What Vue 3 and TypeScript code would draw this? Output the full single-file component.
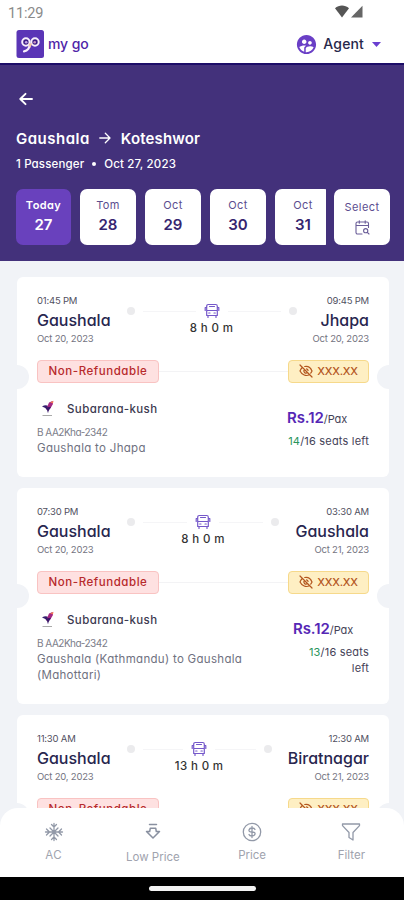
<script setup lang="ts">
interface Stop { time: string; city: string; date: string }
interface Trip {
  from: Stop; to: Stop; duration: string
  details?: { route: string; free: number; total: number }
  tall: boolean
}
interface Day { label: string; day: number }

const days: Day[] = [
  { label: 'Today', day: 27 },
  { label: 'Tom', day: 28 },
  { label: 'Oct', day: 29 },
  { label: 'Oct', day: 30 },
  { label: 'Oct', day: 31 },
]

const trips: Trip[] = [
  {
    from: { time: '01:45 PM', city: 'Gaushala', date: 'Oct 20, 2023' },
    to: { time: '09:45 PM', city: 'Jhapa', date: 'Oct 20, 2023' },
    duration: '8 h 0 m', tall: false,
    details: { route: 'Gaushala to Jhapa', free: 14, total: 16 },
  },
  {
    from: { time: '07:30 PM', city: 'Gaushala', date: 'Oct 20, 2023' },
    to: { time: '03:30 AM', city: 'Gaushala', date: 'Oct 21, 2023' },
    duration: '8 h 0 m', tall: true,
    details: { route: 'Gaushala (Kathmandu) to Gaushala (Mahottari)', free: 13, total: 16 },
  },
  {
    from: { time: '11:30 AM', city: 'Gaushala', date: 'Oct 20, 2023' },
    to: { time: '12:30 AM', city: 'Biratnagar', date: 'Oct 21, 2023' },
    duration: '13 h 0 m', tall: false,
  },
]
</script>

<template>
  <div class="phone">
    <div class="status">
      <span class="clock">11:29</span>
      <svg class="signals" width="28" height="13" viewBox="0 0 28 13">
        <path d="M0 3.2C4 -.4 10 -.4 14 3.2L7 12.4z" fill="#555" />
        <path d="M27.5 .8V12.4H16z" fill="#666" />
      </svg>
    </div>

    <div class="brandbar">
      <svg class="logo" width="28" height="28" viewBox="0 0 28 28">
        <rect x=".5" width="27.500" height="28" rx="2.500" fill="#5a35b6" />
        <path d="M13.500 13.500C14.200 18 11.500 20.800 8 21.300" fill="none" stroke="#f7effb" stroke-width="2.200" stroke-linecap="round" />
        <circle cx="9.900" cy="12" r="3.700" fill="#3b1b87" stroke="#f7effb" stroke-width="2" />
        <circle cx="19" cy="12" r="3.700" fill="#3b1b87" stroke="#f7effb" stroke-width="2" />
        <circle cx="10.200" cy="12.200" r="1.300" fill="#c3a6e4" />
        <circle cx="18.700" cy="12.200" r="1.300" fill="#c994c0" />
        <path d="M12.600 13.500h3.600l-2.100 4.500z" fill="#f6c3a0" />
      </svg>
      <span class="brand">my go</span>
      <div class="agent">
        <svg width="23" height="23" viewBox="0 0 24 24" fill="#6a3fc6">
          <path d="M11.99 2c-5.52 0-10 4.48-10 10s4.480 10 10 10 10-4.480 10-10-4.480-10-10-10zm3.610 6.340c1.070 0 1.930.86 1.930 1.930 0 1.070-.86 1.930-1.930 1.930-1.070 0-1.930-.86-1.930-1.930-.01-1.070.86-1.930 1.930-1.930zm-6-1.580c1.300 0 2.360 1.060 2.360 2.360 0 1.300-1.060 2.360-2.360 2.360s-2.360-1.060-2.360-2.360c0-1.310 1.050-2.360 2.360-2.360zm0 9.130v3.750c-2.400-.75-4.300-2.600-5.140-4.960 1.050-1.120 3.670-1.690 5.140-1.690.53 0 1.200.08 1.900.22-1.640.87-1.900 2.020-1.900 2.680zM11.990 20c-.27 0-.53-.01-.79-.04v-4.070c0-1.420 2.940-2.130 4.400-2.130 1.070 0 2.920.39 3.840 1.150-1.170 2.970-4.060 5.090-7.450 5.090z" />
        </svg>
        <span class="agent-name">Agent</span>
        <svg class="caret" width="9" height="5" viewBox="0 0 9 5"><path d="M0 0h9L4.500 5z" fill="#6a3fd0" /></svg>
      </div>
    </div>

    <header class="hero">
      <svg class="back" width="14" height="14" viewBox="0 0 14 14" fill="none" stroke="#fff" stroke-width="1.900" stroke-linecap="round" stroke-linejoin="round">
        <path d="M13 7H1.500M6.500 1.800L1.300 7l5.200 5.200" />
      </svg>
      <div class="title">
        <span class="t1">Gaushala</span>
        <svg width="12" height="12" viewBox="0 0 12 12" fill="none" stroke="#fff" stroke-width="1.300" stroke-linecap="round" stroke-linejoin="round">
          <path d="M.8 6h10M6.300 1.300L11 6l-4.700 4.700" />
        </svg>
        <span class="t2">Koteshwor</span>
      </div>
      <div class="sub"><span>1 Passenger</span><i class="bullet" /><span>Oct 27, 2023</span></div>
      <div class="dates">
        <div class="strip">
          <div v-for="(d, i) in days" :key="d.day" class="chip" :class="{ active: i === 0 }">
            <span class="chip-label">{{ d.label }}</span>
            <span class="chip-day">{{ d.day }}</span>
          </div>
        </div>
        <div class="chip select">
          <span class="chip-label">Select</span>
          <svg width="15" height="15" viewBox="0 0 15 15" fill="none" stroke="#6a5d98" stroke-width="1.100" stroke-linecap="round" stroke-linejoin="round">
            <path d="M7 14H2.500A1.500 1.500 0 0 1 1 12.500V3.500A1.500 1.500 0 0 1 2.500 2h9.500A1.500 1.500 0 0 1 13.500 3.500V7.500M1 5.500h12.500M4.300.8v2.400M10.200.8v2.400" />
            <circle cx="10.700" cy="10.700" r="2.100" /><path d="M12.300 12.300L14 14" />
          </svg>
        </div>
      </div>
    </header>

    <main class="list">
      <article v-for="t in trips" :key="t.from.time" class="card" :class="{ tall: t.tall }">
        <i class="notch left" /><i class="notch right" />
        <div class="journey">
          <div class="stop">
            <span class="time">{{ t.from.time }}</span>
            <span class="city">{{ t.from.city }}</span>
            <span class="date">{{ t.from.date }}</span>
          </div>
          <div class="track">
            <div class="rail">
              <i class="dot" /><i class="line" />
              <svg width="16" height="16" viewBox="0 0 16 16" fill="none" stroke="#7558ca" stroke-width="1.200" stroke-linecap="round" stroke-linejoin="round">
                <path d="M4.300 1.500h7.400Q13.300 1.500 13.300 3.200V12.500H2.700V3.200Q2.700 1.500 4.300 1.500zM2.700 7.500h10.600M5.500 3.500h5M2.600 4.500H1.200v3M13.400 4.500h1.400v3M4 12.700v1.800M12 12.700v1.800M4.700 10h1.300M10 10h1.300" />
              </svg>
              <i class="line" /><i class="dot" />
            </div>
            <span class="duration">{{ t.duration }}</span>
          </div>
          <div class="stop end">
            <span class="time">{{ t.to.time }}</span>
            <span class="city">{{ t.to.city }}</span>
            <span class="date">{{ t.to.date }}</span>
          </div>
        </div>
        <div class="tags">
          <span class="tag red">Non-Refundable</span>
          <i class="tag-line" />
          <span class="tag amber">
            <svg width="14" height="14" viewBox="0 0 14 14" fill="none" stroke="#b4571f" stroke-width="1.200" stroke-linecap="round" stroke-linejoin="round">
              <path d="M1 1l12 12M3.500 3.300Q1.900 4.700 1 7c2 4 6 5.500 9.500 3.800M5.700 2.500C9 1.900 11.700 3.700 13 7q-.5 1.200-1.300 2.100M5.400 5.500A2.200 2.200 0 0 0 8.500 8.600M7.500 4.900A2.200 2.200 0 0 1 9.100 6.500" />
            </svg>
            <span class="mask">XXX.XX</span>
          </span>
        </div>
        <div v-if="t.details" class="details">
          <div class="operator">
            <div class="op-row">
              <svg width="14" height="18" viewBox="0 0 14 18">
                <path d="M1 6.500Q5 4 7.500 6.500L6.500 9z" fill="#35206f" />
                <path d="M5 9.500L8 2.500 11.500 1 12 4 9 9z" fill="#a52882" />
                <path d="M9 2.500L12.500 .8 12 3.200z" fill="#f07852" />
                <path d="M4 7.500l6-.8-2.500 4.500-.5 2L6 10z" fill="#3a1769" />
                <path d="M1.500 15.500h9.500" stroke="#aaa" stroke-width="1" />
              </svg>
              <span class="op-name">Subarana-kush</span>
            </div>
            <span class="plate">B AA2Kha-2342</span>
            <span class="route">{{ t.details.route }}</span>
          </div>
          <div class="fare">
            <div class="price"><b>Rs.12</b><span>/Pax</span></div>
            <div class="seats"><em>{{ t.details.free }}</em>/{{ t.details.total }} seats left</div>
          </div>
        </div>
      </article>
    </main>

    <nav class="tabs">
      <div class="tab">
        <svg width="20" height="20" viewBox="0 0 20 20" fill="none" stroke="#9299a8" stroke-width="1.300" stroke-linecap="round" stroke-linejoin="round">
          <path d="M10 1.500v17M1.500 10h17M7.500 2.500L10 5l2.500-2.500M7.500 17.500L10 15l2.500 2.500M2.500 7L5.500 10l-3 3M17.500 7l-3 3 3 3M6 6l8 8M14 6l-8 8" />
        </svg>
        <span class="spaced">AC</span>
      </div>
      <div class="tab low">
        <svg width="18" height="20" viewBox="0 0 18 20" fill="none" stroke="#8990a0" stroke-width="1.500" stroke-linecap="round" stroke-linejoin="round">
          <path d="M5.500 2.500h7M6.300 6.200h5.400l.6 3.300h3.200L9 16 2.500 9.500h3.200z" />
        </svg>
        <span>Low Price</span>
      </div>
      <div class="tab">
        <svg width="20" height="20" viewBox="0 0 20 20" fill="none" stroke="#9299a8" stroke-width="1.300" stroke-linecap="round" stroke-linejoin="round">
          <circle cx="10" cy="10" r="8.700" />
          <path d="M10 4.500v11M13 7.500Q12.500 6 10 6T7 8t3 2 3 2-3 2-3-1.500" />
        </svg>
        <span>Price</span>
      </div>
      <div class="tab">
        <svg width="20" height="20" viewBox="0 0 20 20" fill="none" stroke="#9299a8" stroke-width="1.300" stroke-linecap="round" stroke-linejoin="round">
          <path d="M1.500 2h17v1.600L12 10.500V18l-4-2.500v-5L1.500 3.600z" />
        </svg>
        <span>Filter</span>
      </div>
    </nav>
    <div class="gesture"><i /></div>
  </div>
</template>

<style>
body { margin: 0; background: #f1f3f7; }
</style>

<style scoped>
.phone { width: 404px; height: 900px; display: flex; flex-direction: column; overflow: hidden; position: relative; background: #f1f3f7; color: #28264a; font-family: Inter, "Open Sans", sans-serif; font-feature-settings: "cv11"; }
.phone *, .phone { box-sizing: border-box; }
svg { display: block; flex: none; }
span { white-space: nowrap; }
.status { height: 26px; flex: none; background: #fff; display: flex; justify-content: space-between; padding: 5px 41px 0 8px; }
.clock { font: 400 14.5px/17px Roboto, sans-serif; letter-spacing: -.2px; color: #8a8a8a; }
.brandbar { height: 37px; flex: none; background: #fff; display: flex; align-items: center; padding: 0 23px 1px 16px; }
.brand { margin-left: 4px; font-size: 14px; font-weight: 500; color: #4f25a8; letter-spacing: -.1px; padding-bottom: 2px; }
.agent { margin-left: auto; display: flex; align-items: center; }
.agent-name { margin-left: 5px; font-size: 14px; font-weight: 500; color: #27274a; letter-spacing: .15px; padding-bottom: 2px; }
.caret { margin-left: 8px; }
.hero { height: 198px; flex: none; background: #43317b; border-top: 2px solid #1d0d68; color: #fff; padding: 27px 14px 0 16px; display: flex; flex-direction: column; }
.back { margin-left: 3px; }
.title { margin-top: 22px; height: 20px; display: flex; align-items: center; font-size: 15px; font-weight: 600; }
.title svg { margin: 0 10px 0 9px; }
.t1 { letter-spacing: .5px; }
.t2 { letter-spacing: .15px; }
.sub { margin-top: 8px; height: 16px; display: flex; align-items: center; font-size: 11.5px; font-weight: 500; letter-spacing: .15px; }
.bullet { width: 4px; height: 4px; border-radius: 50%; background: #fff; margin: 0 8px; }
.dates { margin-top: 17px; display: flex; gap: 8px; }
.strip { width: 310px; display: flex; gap: 9px; overflow: hidden; }
.chip { width: 56px; height: 56px; flex: none; border-radius: 7px; background: #fff; color: #5b4d8f; display: flex; flex-direction: column; align-items: center; padding-top: 8px; }
.chip-label { font-size: 11px; line-height: 16px; letter-spacing: .4px; }
.chip-day { font-size: 15px; line-height: 22px; font-weight: 600; color: #362570; margin-top: 1px; }
.active { width: 55px; background: #6941bd; color: #fff; }
.active .chip-label { font-weight: 600; }
.active .chip-day { color: #fff; }
.select { padding-top: 10px; }
.select svg { margin-top: 5px; }
.list { flex: 1; min-height: 0; overflow: hidden; padding: 16px 15px 0 17px; display: flex; flex-direction: column; gap: 11px; }
.card { position: relative; height: 200px; flex: none; background: #fff; border-radius: 6px; padding: 17px 20px 0 20px; overflow: hidden; }
.tall { height: 216px; }
.notch { position: absolute; width: 24px; height: 24px; border-radius: 50%; background: #f1f3f7; top: 88px; }
.tall .notch { top: 96px; }
.left { left: -12px; }
.right { right: -12px; }
.journey { display: flex; gap: 16px; height: 65px; }
.stop { display: flex; flex-direction: column; align-items: flex-start; }
.end { align-items: flex-end; }
.time { font-size: 9.5px; line-height: 14px; color: #51505f; letter-spacing: -.2px; }
.city { font-size: 16px; line-height: 24px; color: #28264f; font-weight: 500; }
.date { font-size: 9.5px; line-height: 13px; color: #74747f; letter-spacing: -.2px; }
.track { flex: 1; display: flex; flex-direction: column; align-items: center; padding-top: 9px; }
.rail { width: 100%; display: flex; align-items: center; }
.dot { width: 8px; height: 8px; border-radius: 50%; background: #ebebed; }
.line { flex: 1; height: 1px; background: #f5f5f7; margin: 0 8px; }
.duration { font-size: 11.5px; line-height: 19px; color: #333; font-weight: 500; letter-spacing: .35px; }
.tags { display: flex; align-items: center; height: 24px; }
.tag { height: 23px; border-radius: 4px; display: flex; align-items: center; justify-content: center; font-size: 11.5px; font-weight: 500; }
.red { width: 122px; background: #fee1e1; border: 1px solid #f9c3c2; color: #b72a2c; letter-spacing: .55px; }
.amber { width: 81px; background: #feefc3; border: 1px solid #f6d98b; color: #b4571f; gap: 4px; font-size: 11px; letter-spacing: -.2px; }
.tag-line { flex: 1; height: 1px; background: #f3f3f5; }
.details { display: flex; justify-content: space-between; margin-top: 17px; }
.operator { display: flex; flex-direction: column; width: 212px; }
.op-row { display: flex; align-items: center; height: 18px; padding-left: 4px; }
.op-name { margin-left: 12px; font-size: 11.5px; color: #3c3a50; font-weight: 500; letter-spacing: .4px; }
.plate { font-size: 10px; line-height: 14px; margin-top: 7px; color: #7b7d89; letter-spacing: -.5px; }
.route { font-size: 11.5px; line-height: 15.5px; margin-top: 2px; color: #6f717f; white-space: normal; letter-spacing: .3px; }
.fare { width: 82px; padding-top: 8px; }
.tall .fare { width: 76px; }
.price { line-height: 20px; white-space: nowrap; font-size: 11px; color: #444257; }
.price b { font-size: 15px; font-weight: 600; color: #5627b5; letter-spacing: -.1px; }
.seats { margin-top: 4px; text-align: right; font-size: 11px; line-height: 16px; color: #444257; letter-spacing: .2px; margin-left: -4px; }
.seats em { font-style: normal; color: #29945a; }
.tabs { position: absolute; left: 0; right: 0; top: 808px; height: 69px; background: #fff; border-radius: 18px 18px 0 0; display: grid; grid-template-columns: repeat(4, 1fr); padding: 14px 3px 0 4px; }
.tab { display: flex; flex-direction: column; align-items: center; gap: 5px; font-size: 11.5px; line-height: 16px; color: #a0a3ae; }
.spaced { letter-spacing: .5px; }
.low { gap: 7px; }
.gesture { position: absolute; left: 0; right: 0; top: 877px; height: 23px; background: #000; display: flex; justify-content: center; padding-top: 9px; }
.gesture i { width: 107px; height: 5px; border-radius: 3px; background: #f3f3f3; }
</style>
